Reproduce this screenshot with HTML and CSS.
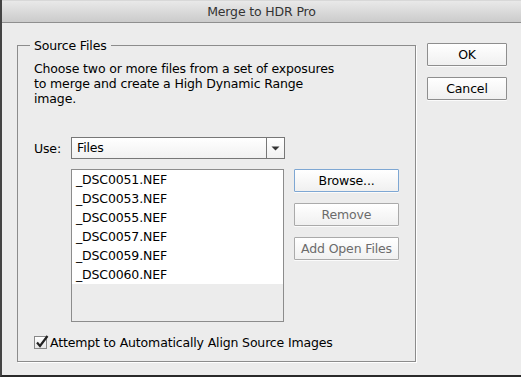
FILE: index.html
```html
<!DOCTYPE html>
<html lang="en">
<head>
    <meta charset="UTF-8">
    <meta name="viewport" content="width=device-width, initial-scale=1.0">
    <title>Merge to HDR Pro</title>
    <link rel="stylesheet" href="styles.css">
</head>
<body>
    <div class="window">
        <div class="titlebar">Merge to HDR Pro</div>

        <div class="main">
            <fieldset class="group">
                <legend>Source Files</legend>
                <p class="desc">Choose two or more files from a set of exposures<br>to merge and create a High Dynamic Range<br>image.</p>

                <div class="use-row">
                    <span class="use-label">Use:</span>
                    <div class="select">
                        <span class="select-value">Files</span>
                        <span class="select-arrow">
                            <svg width="9" height="5" viewBox="0 0 9 5"><path d="M0.5 0.5h8L4.5 4.5z" fill="#333"/></svg>
                        </span>
                    </div>
                </div>

                <div class="files-row">
                    <ul class="file-list">
                        <li>_DSC0051.NEF</li>
                        <li>_DSC0053.NEF</li>
                        <li>_DSC0055.NEF</li>
                        <li>_DSC0057.NEF</li>
                        <li>_DSC0059.NEF</li>
                        <li>_DSC0060.NEF</li>
                    </ul>
                    <div class="file-buttons">
                        <button class="btn focus">Browse...</button>
                        <button class="btn dim">Remove</button>
                        <button class="btn dim">Add Open Files</button>
                    </div>
                </div>

                <label class="check-row">
                    <span class="checkbox">
                        <svg width="15" height="15" viewBox="0 0 15 15"><path d="M3 7.5l3 3.5L13.5 1" fill="none" stroke="#222" stroke-width="2.2"/></svg>
                    </span>
                    Attempt to Automatically Align Source Images
                </label>
            </fieldset>

            <div class="side-buttons">
                <button class="btn">OK</button>
                <button class="btn">Cancel</button>
            </div>
        </div>
    </div>
</body>
</html>
```

FILE: styles.css
```css
* { box-sizing: border-box; }

body {
    margin: 0;
    font-family: "DejaVu Sans", "Liberation Sans", sans-serif;
    font-size: 12.5px;
    letter-spacing: -0.15px;
    color: #000;
    background: #ececec;
}

.window {
    width: 521px;
    height: 377px;
    background: #ececec;
    border-left: 2px solid #444;
    border-bottom: 2px solid #2a2a2a;
}

.titlebar {
    height: 23px;
    line-height: 22px;
    text-align: center;
    font-size: 12.5px;
    color: #333;
    background: linear-gradient(#e9e9e9, #cbcbcb);
    border-top: 1px solid #d8d8d8;
    border-bottom: 1px solid #8f8f8f;
}

.main {
    display: flex;
    align-items: flex-start;
    padding: 15px 0 0 15px;
}

.group {
    width: 399px;
    height: 324px;
    margin: 0;
    padding: 0 16px;
    border: 1px solid #8c8c8c;
    box-shadow: 1px 1px 0 #fff;
    min-width: 0;
}

.group legend {
    padding: 0 4px;
    margin-left: -4px;
    line-height: 15px;
}

.desc {
    margin: 8px 0 0;
    line-height: 15px;
}

.use-row {
    display: flex;
    align-items: center;
    margin-top: 31px;
}

.use-label {
    width: 37px;
}

.select {
    display: flex;
    width: 214px;
    height: 22px;
    border: 1px solid #777;
    background: linear-gradient(#fff, #f1f1f1);
}

.select-value {
    flex: 1;
    padding-left: 5px;
    line-height: 20px;
}

.select-arrow {
    width: 18px;
    border-left: 1px solid #777;
    display: flex;
    align-items: center;
    justify-content: center;
}

.files-row {
    display: flex;
    margin: 10px 0 0 37px;
}

.file-list {
    list-style: none;
    margin: 0;
    padding: 0;
    width: 214px;
    height: 153px;
    border: 1px solid #8c8c8c;
    background: #ececec;
}

.file-list li {
    height: 19px;
    line-height: 19px;
    padding-left: 4px;
    background: #fff;
}

.file-buttons {
    display: flex;
    flex-direction: column;
    gap: 11px;
    margin-left: 10px;
}

.btn {
    font-family: inherit;
    font-size: 12.5px;
    letter-spacing: -0.15px;
    color: #000;
    width: 105px;
    height: 23px;
    padding: 0;
    border: 1px solid #8e8e8e;
    border-radius: 1px;
    background: linear-gradient(#fff, #f0f0f0);
    box-shadow: 0 1px 0 rgba(255,255,255,0.8);
}

.btn.focus { border-color: #7ea7d3; }
.btn.dim { color: #6b6b6b; border-color: #aaa; }

.check-row {
    display: flex;
    align-items: center;
    margin-top: 13px;
    height: 15px;
}

.checkbox {
    width: 13px;
    height: 13px;
    margin-right: 3px;
    border: 1px solid #888;
    background: linear-gradient(#fff, #e6e6e6);
    position: relative;
}

.checkbox svg {
    position: absolute;
    left: -1px;
    top: -2px;
}

.side-buttons {
    display: flex;
    flex-direction: column;
    gap: 11px;
    margin: 5px 0 0 11px;
}

.side-buttons .btn {
    width: 80px;
}
```
